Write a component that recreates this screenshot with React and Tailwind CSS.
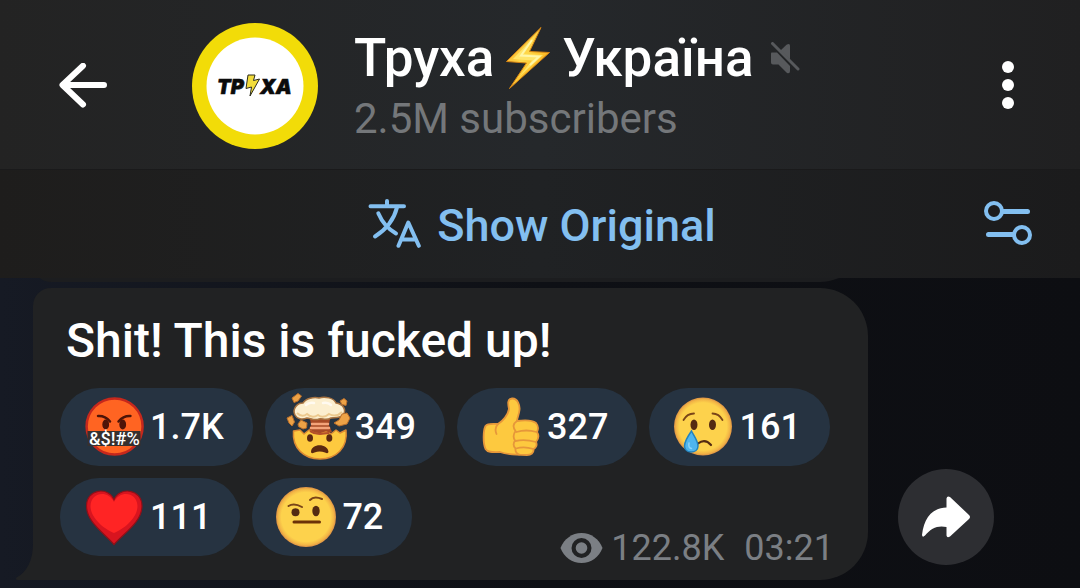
import React, { useState } from 'react';

const BackIcon = () => (
    <svg width="48" height="46" viewBox="0 0 48 46" fill="none" stroke="#fff" strokeWidth="6" strokeLinecap="round" strokeLinejoin="round">
        <path d="M45 22H4M24 2.800L3.500 22L24 41.500" />
    </svg>
);

const MutedIcon = () => (
    <svg width="30" height="32" viewBox="0 0 30 32" className="shrink-0" aria-label="Muted">
        <path d="M1.500 10.500L7 10.500L20 24V29Q20 32 17 31L8.500 22.500H3Q1 22.500 1 20.500V12Q1 10.800 1.500 10.500Z" fill="#57595c" />
        <path d="M10.500 8.500L16.500 2.800Q20 0.500 20 4V17.500Z" fill="#57595c" />
        <path d="M2.500 1.500L28 27" stroke="#57595c" strokeWidth="3" strokeLinecap="round" />
    </svg>
);

const BoltEmoji = () => (
    <svg width="44" height="62" viewBox="0 0 44 62" className="shrink-0" role="img" aria-label="⚡">
        <defs>
            <linearGradient id="bolt" x1="0" y1="0" x2="1" y2="1">
                <stop offset="0" stopColor="#f09a1b" />
                <stop offset="0.45" stopColor="#ffd84a" />
                <stop offset="0.6" stopColor="#ffc62e" />
                <stop offset="1" stopColor="#e88a10" />
            </linearGradient>
        </defs>
        <path d="M35 0.500L0.500 34.500L20.500 36L3.500 61.500L43.500 25.500L23.500 24.500Z" fill="url(#bolt)" stroke="#d98613" strokeWidth="1" strokeLinejoin="round" />
        <path d="M29 9L7 32L26 33.500L13 50L37 28L18 27Z" fill="#ffe56a" />
        <path d="M26 13L15 28.500L33 29.500L24 38" fill="none" stroke="#fff6a8" strokeWidth="2" />
    </svg>
);

const MoreIcon = () => (
    <svg width="12" height="50" viewBox="0 0 12 50" fill="#fff">
        <circle cx="6" cy="6" r="6" />
        <circle cx="6" cy="24" r="6" />
        <circle cx="6" cy="42" r="6" />
    </svg>
);

const TranslateIcon = () => (
    <svg width="53" height="51" viewBox="0 0 53 51" fill="none" stroke="#83bff0" strokeWidth="4" strokeLinecap="round" strokeLinejoin="round">
        <path d="M2.500 7.300H36M19 2V7M29 8.500C26 20 19 30 7 37.500M10.300 14.300C14 23 20 30 28 34.500" />
        <path d="M30.500 46.800L40.300 23.500L50.800 46.800M34 40.500H47.500" />
    </svg>
);

const SettingsIcon = () => (
    <svg width="48" height="48" viewBox="0 0 48 48" fill="none" stroke="#83bff0" strokeWidth="4" strokeLinecap="round">
        <circle cx="10" cy="11" r="8" />
        <circle cx="38" cy="35" r="8" />
        <path d="M19 11.500H43.500M4.500 34.500H29" strokeWidth="5" />
    </svg>
);

const EyeIcon = () => (
    <svg width="43" height="30" viewBox="0 0 43 30" className="shrink-0">
        <path d="M0.500 15C4 6 12 0 21.500 0S39 6 42.500 15C39 24 31 30 21.500 30S4 24 0.500 15Z" fill="#7b7f84" />
        <circle cx="21.500" cy="15" r="10" fill="#212223" />
        <circle cx="21.500" cy="15" r="5.800" fill="#7b7f84" />
    </svg>
);

const ForwardIcon = () => (
    <svg width="48" height="42" viewBox="0 0 48 42" fill="#fff">
        <path d="M24.500 2.500Q25 -0.500 28 1L47 19Q49 21 47 23L28 40.500Q25 42.500 24.500 39.500V31C16 29 9 32 3 39.500Q0.500 42 0 39C2 23 9 12 24.500 11.500Z" />
    </svg>
);

const Avatar = () => (
    <svg width="126" height="126" viewBox="0 0 126 126" className="shrink-0" role="img" aria-label="Труха">
        <circle cx="63" cy="63" r="63" fill="#f2dc08" />
        <circle cx="63" cy="63" r="48.500" fill="#fff" />
        <g fill="#0b0b0b" stroke="#0b0b0b" strokeWidth="0.600" fontFamily="Inter, Roboto, sans-serif" fontWeight="900" fontStyle="italic" fontSize="20">
            <text x="25" y="71">ТР</text>
            <text x="68" y="71">ХА</text>
        </g>
        <path d="M56 52L63 52L61.500 57.500L67.500 56L58 73L59.500 64L54 65.500Z" fill="#f2dc3a" stroke="#2a2a1a" strokeWidth="1" strokeLinejoin="round" />
    </svg>
);

const FaceGradient = () => (
    <defs>
        <radialGradient id="face" cx="0.5" cy="0.5" r="0.5">
            <stop offset="0.82" stopColor="#fdd24c" />
            <stop offset="0.93" stopColor="#f2b546" />
            <stop offset="1" stopColor="#dc9145" />
        </radialGradient>
    </defs>
);

const CursingEmoji = () => (
    <>
        <circle cx="30.600" cy="29.500" r="28" fill="#ff6422" stroke="#c6281c" strokeWidth="2.500" />
        <g fill="#4d1408">
            <ellipse cx="21.700" cy="27.500" rx="3.400" ry="5" />
            <ellipse cx="38.700" cy="27.500" rx="3.400" ry="5" />
        </g>
        <path d="M14 19Q21 18.500 26 24.500M46.500 19Q39.500 18.500 34.500 24.500" fill="none" stroke="#4d1408" strokeWidth="2.500" strokeLinecap="round" />
        <rect x="3.500" y="34" width="53" height="15" fill="#37302e" />
        <text x="5" y="47.500" fill="#fff" fontFamily="Roboto, sans-serif" fontWeight="500" fontSize="18">&amp;$!#%</text>
    </>
);

const ExplodingEmoji = () => (
    <>
        <path d="M21 22L41 22L40 28L43 35L31 39L19 35L22 28Z" fill="#a64a26" />
        <path d="M23 27H39M22 31H40" stroke="#f3a37a" strokeWidth="2.500" strokeLinecap="round" />
        <path d="M4.500 34L11 33L15 37L20 33L25 36L31 37L37 35L42 37L47 33L51 36L57 33C59 51 47 62 31 62S3 51 4.500 34Z" fill="#fdc93f" stroke="#dc8a32" strokeWidth="1.500" strokeLinejoin="round" />
        <path d="M21 34L25 36L31 37L40 36" stroke="#b4502a" strokeWidth="2" fill="none" />
        <path d="M6 18C3 12 8 6 14 6C17 1 25 0 30 1C36 -1 45 1 47 6C54 7 58 13 54 18C50 22 44 20 42 21C37 24 33 21 30 22C26 24 21 21 18 21C13 23 8 22 6 18Z" fill="#fcefcf" stroke="#a87442" strokeWidth="1.500" />
        <path d="M8 16Q13 21 18 17Q23 22 29 18Q34 22 40 17Q47 21 53 15" fill="none" stroke="#ecc98e" strokeWidth="2" />
        <path d="M17 8Q20 5 25 6M34 6Q39 5 42 8" fill="none" stroke="#fffaf0" strokeWidth="2.500" strokeLinecap="round" />
        <g fill="#eda246" stroke="#b96f2b" strokeWidth="1" strokeLinejoin="round">
            <path d="M3 1L9 -3.500L12.500 -1L9 4L5 5.500Z" />
            <path d="M51 4L55 1.500L58 4L57 8.500L53 7.500Z" />
            <path d="M-2 21L3 18.500L5.500 25L3 29L0 26Z" />
            <path d="M9 27L12 23L18 26L17.500 31L14 32L9.500 29.500Z" />
            <path d="M45 26L50 23L53 17L58 16L61 21L58 27L50 29Z" />
        </g>
        <g fill="#5a2810">
            <ellipse cx="21" cy="41" rx="3" ry="3.800" />
            <ellipse cx="40.300" cy="41" rx="3" ry="3.800" />
            <path d="M22 55C22 46 39 46 39.500 55Q39 57 36 55.500Q30.500 53.500 25.500 55.500Q22 57 22 55Z" />
        </g>
    </>
);

const ThumbEmoji = () => (
    <>
        <path d="M17 27C22 24 27 18 28 12C27 7 26 2 31 1.500C37 1 39 9 38.500 13C38 18 36 21 36 24C43 23 51 23 55 26C57.500 29 57 33 56 35C58 38 57.500 42 55 45C56.500 48 55 51 52.500 52C53 56 50 58 46 58C37 58 27 58 19 55C13 55 7 56 4.500 52C2 46 2 34 4.500 29C7 26 12 27 17 27Z" fill="#fdc93f" stroke="#e6973a" strokeWidth="1.800" strokeLinejoin="round" />
        <path d="M17 27Q13 31 15.500 37M55.500 35Q45 32 35.500 35M55 45Q44 42 34.500 44M52.500 52Q43 49 35 51.500M36 24Q30 28 34.500 34Q31 39 34 43.500Q31 48 34.500 51.500Q34 56 38 57.500" fill="none" stroke="#e6973a" strokeWidth="1.800" strokeLinecap="round" />
    </>
);

const CryEmoji = () => (
    <>
        <FaceGradient />
        <circle cx="30" cy="29.500" r="29" fill="url(#face)" />
        <g fill="#542b12">
            <ellipse cx="21" cy="27.700" rx="3.500" ry="5.300" />
            <ellipse cx="39.500" cy="27.700" rx="3.500" ry="5.300" />
        </g>
        <path d="M10.500 23Q14 16.500 21 16.500M39.500 16.500Q46 16.500 49.500 23" fill="none" stroke="#7a4518" strokeWidth="1.800" strokeLinecap="round" />
        <path d="M25 46.500Q32 41 38 48" fill="none" stroke="#542b12" strokeWidth="2.200" strokeLinecap="round" />
        <path d="M18.500 34C15 39 11.500 44 11.500 49C11.500 57 25 57 25 49C25 44 21 39 18.500 34Z" fill="#4fb5ee" stroke="#2383bd" strokeWidth="1.500" />
        <path d="M16 46Q15 51 18.500 51.500" fill="none" stroke="#8ad5fa" strokeWidth="1.500" strokeLinecap="round" />
    </>
);

const HeartEmoji = () => (
    <>
        <path d="M30 57.500C20 46 2.500 35 2.500 19C2.500 2 24 -1 30 12.500C36 -1 58 2 58 19C58 35 40 46 30 57.500Z" fill="#d8141f" stroke="#8f1018" strokeWidth="1.200" />
        <path d="M30 46C20 42 6.500 31 6.500 19C7 5 24 3 30 15C36 3 53 5 53.500 19C53.500 31 40 42 30 46Z" fill="#ff2424" />
    </>
);

const EyebrowEmoji = () => (
    <>
        <FaceGradient />
        <circle cx="30" cy="30" r="30" fill="url(#face)" />
        <g fill="#542b12">
            <ellipse cx="19.500" cy="25.300" rx="4" ry="4" />
            <ellipse cx="40" cy="24" rx="3.700" ry="5.300" />
        </g>
        <path d="M12.500 19Q18 15.500 26 20M34 13Q38 8.500 46 12" fill="none" stroke="#7a4518" strokeWidth="2" strokeLinecap="round" />
        <path d="M18 35H43.500" stroke="#6b3208" strokeWidth="3" strokeLinecap="round" />
    </>
);

const reactions = [
    { name: '🤬', count: '1.7K', Emoji: CursingEmoji },
    { name: '🤯', count: '349', Emoji: ExplodingEmoji },
    { name: '👍', count: '327', Emoji: ThumbEmoji },
    { name: '😢', count: '161', Emoji: CryEmoji },
    { name: '❤', count: '111', Emoji: HeartEmoji },
    { name: '🤨', count: '72', Emoji: EyebrowEmoji },
];

const App = () => {
    const [selected, setSelected] = useState(null);

    return (
        <div className="min-h-screen flex flex-col bg-[#0d0e12] font-['Roboto',sans-serif] text-white">
            {/* Channel header */}
            <header className="flex items-center pt-[23px] pb-5 pl-[59px] pr-[66px] bg-linear-to-r from-[#232323] via-[#25282b] to-[#202021]">
                <button type="button" aria-label="Back" className="shrink-0">
                    <BackIcon />
                </button>
                <div className="ml-[85px] shrink-0">
                    <Avatar />
                </div>
                <div className="ml-9 pt-1 flex-1 min-w-0">
                    <h1 className="flex items-center text-[53px] leading-[62px] font-medium whitespace-nowrap">
                        <span>Труха</span>
                        <span className="mx-3"><BoltEmoji /></span>
                        <span>Україна</span>
                        <span className="ml-4"><MutedIcon /></span>
                    </h1>
                    <p className="text-[42px] leading-[60px] text-[#74777a]">2.5M subscribers</p>
                </div>
                <button type="button" aria-label="More options" className="shrink-0">
                    <MoreIcon />
                </button>
            </header>

            {/* Translation bar */}
            <div className="grid grid-cols-[1fr_auto_1fr] items-center h-[109px] pl-[52px] pr-12 border-t border-[#1a1a1b] bg-linear-to-r from-[#1e1d1c] via-[#202224] to-[#1b1b1c]">
                <button type="button" className="col-start-2 flex items-center gap-4 text-[45px] leading-[54px] font-medium text-[#83bff0]">
                    <TranslateIcon />
                    <span className="pt-1">Show Original</span>
                </button>
                <button type="button" aria-label="Translation settings" className="justify-self-end">
                    <SettingsIcon />
                </button>
            </div>

            {/* Messages */}
            <main className="flex-1 flex flex-col gap-1.5 overflow-hidden pl-[33px] pr-[86px] pb-2 bg-linear-to-r from-[#161a24] via-[#0e1015] to-[#0d0e12]">
                <div className="-mt-[76px] mr-[126px] h-20 shrink-0 rounded-bl-[18px] rounded-br-[48px] bg-[#1c1d1f]"></div>
                <div className="flex items-end gap-[30px]">
                    <article className="relative flex-1 min-w-0 pt-[22px] pb-6 pl-[27px] pr-[34px] rounded-tl-[18px] rounded-r-[48px] bg-[#212223]">
                        <svg width="18" height="36" viewBox="0 0 18 36" className="absolute bottom-0 -left-[17px]">
                            <path d="M18 0H17C17 16 11 28 0.500 33.500Q-1 36 2 36H18Z" fill="#212223" />
                        </svg>
                        <p className="pl-1.5 text-[48px] leading-[62px] font-medium">Shit! This is fucked up!</p>
                        <div className="mt-4 flex flex-wrap gap-3">
                            {reactions.map(({ name, count, Emoji }) => (
                                <button
                                    key={name}
                                    type="button"
                                    aria-label={`${name} ${count}`}
                                    aria-pressed={selected === name}
                                    onClick={() => setSelected(selected === name ? null : name)}
                                    className="flex items-center gap-1.5 h-[78px] pl-6 pr-[29px] rounded-full bg-[#263341] text-[36px] leading-[40px] font-medium"
                                >
                                    <svg width="60" height="60" viewBox="0 0 60 60" className="shrink-0 overflow-visible">
                                        <Emoji />
                                    </svg>
                                    <span>{count}</span>
                                </button>
                            ))}
                            <div className="ml-auto -mb-2.5 self-end flex items-center text-[36px] leading-9 text-[#7b7f84]">
                                <EyeIcon />
                                <span className="ml-2">122.8K</span>
                                <time className="ml-5">03:21</time>
                            </div>
                        </div>
                    </article>
                    <button type="button" aria-label="Forward" className="mb-[15px] size-24 shrink-0 flex items-center justify-center rounded-full bg-[#2d2e32]">
                        <ForwardIcon />
                    </button>
                </div>
            </main>
        </div>
    );
};

export default App;
